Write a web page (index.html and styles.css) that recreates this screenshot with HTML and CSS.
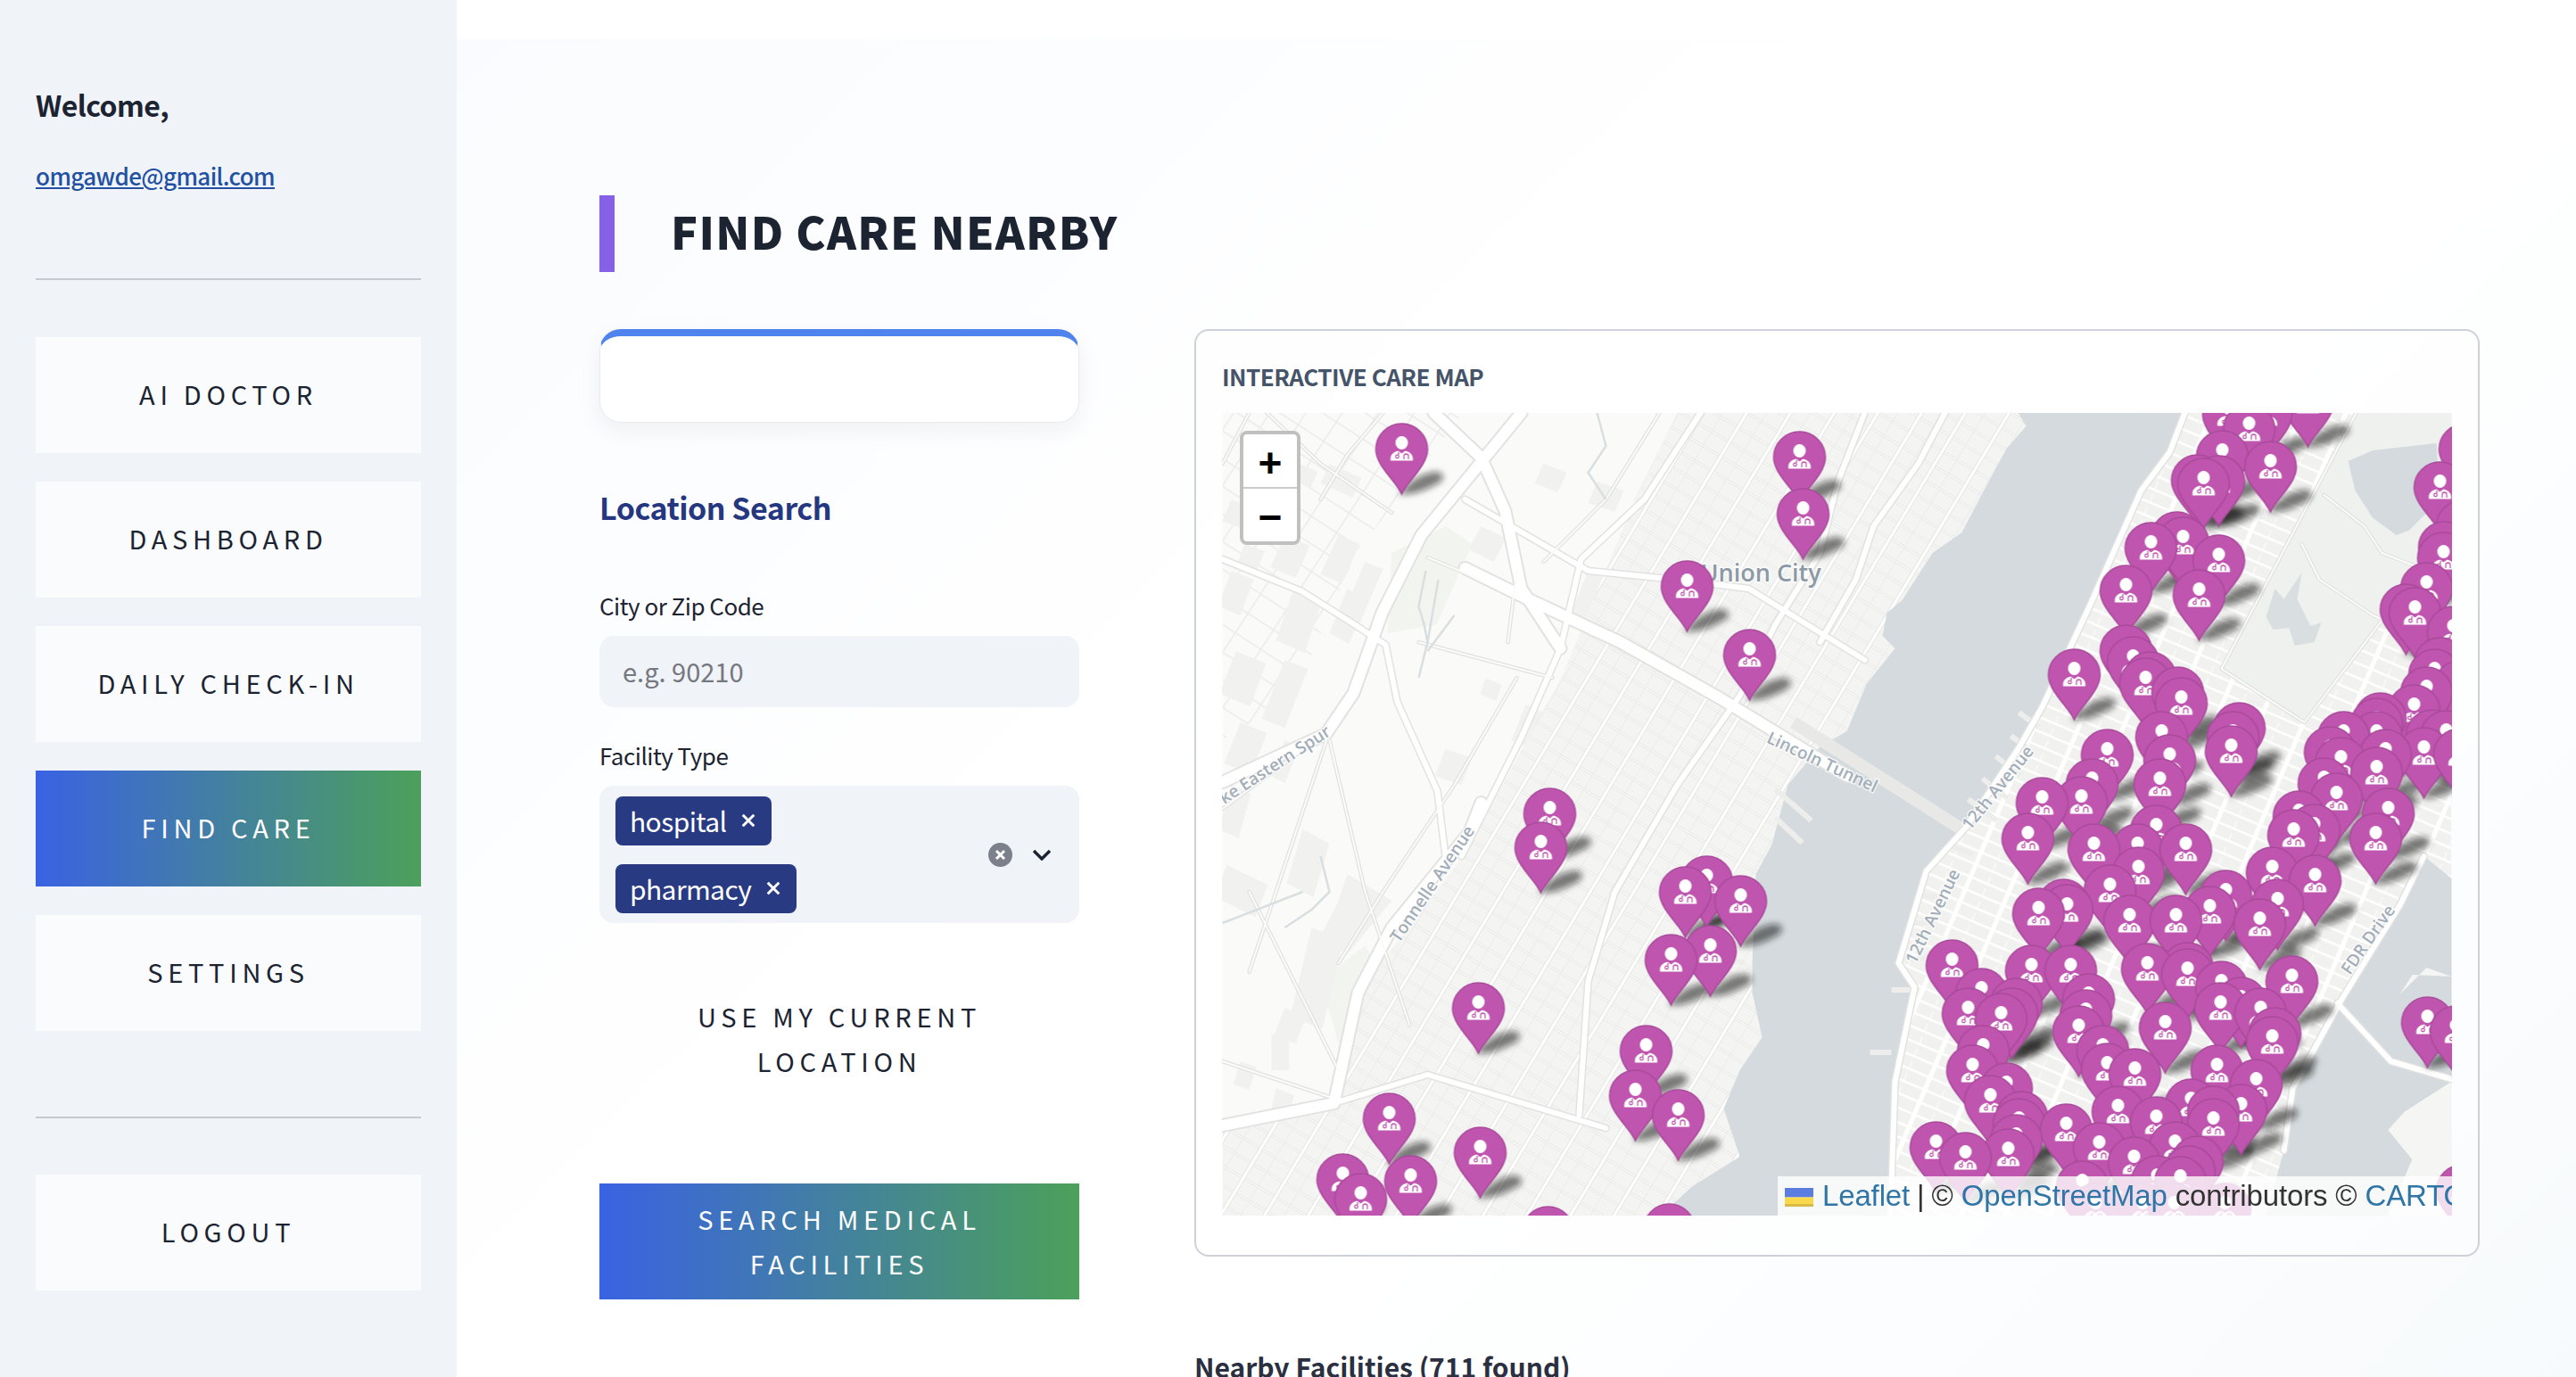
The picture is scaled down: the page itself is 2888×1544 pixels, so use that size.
FILE: index.html
```html
<!DOCTYPE html>
<html lang="en">
<head>
<meta charset="utf-8">
<title>Find Care Nearby</title>
<link rel="stylesheet" href="styles.css">
</head>
<body>
<div class="app">
  <aside class="sidebar">
    <p class="welcome">Welcome,</p>
    <p class="email-row"><a class="email" href="#">omgawde@gmail.com</a></p>
    <hr class="rule rule-top">
    <nav class="nav">
      <button class="btn nav-btn">AI DOCTOR</button>
      <button class="btn nav-btn">DASHBOARD</button>
      <button class="btn nav-btn">DAILY CHECK-IN</button>
      <button class="btn nav-btn btn-primary">FIND CARE</button>
      <button class="btn nav-btn">SETTINGS</button>
    </nav>
    <hr class="rule rule-bottom">
    <button class="btn nav-btn">LOGOUT</button>
  </aside>
  <main class="main">
    <div class="top-strip"></div>
    <div class="content">
      <header class="page-title">
        <span class="title-bar"></span>
        <h1 class="title-text">FIND CARE NEARBY</h1>
      </header>
      <div class="columns">
        <section class="form-col">
          <div class="empty-card"></div>
          <h2 class="section-title">Location Search</h2>
          <label class="field-label field-label-first">City or Zip Code</label>
          <div class="text-input">e.g. 90210</div>
          <label class="field-label field-label-second">Facility Type</label>
          <div class="multi">
            <div class="tags">
              <span class="tag">hospital<svg class="tag-x" viewBox="0 0 14 14"><path d="M1.5 1.5l11 11M12.5 1.5l-11 11"/></svg></span>
              <span class="tag">pharmacy<svg class="tag-x" viewBox="0 0 14 14"><path d="M1.5 1.5l11 11M12.5 1.5l-11 11"/></svg></span>
            </div>
            <svg class="clear-icon" viewBox="0 0 27 27"><circle cx="13.500" cy="13.500" r="13.500"/><path d="M9 9l9 9M18 9l-9 9"/></svg>
            <svg class="chevron-icon" viewBox="0 0 22 14"><path d="M2 3l9 9 9-9"/></svg>
          </div>
          <button class="btn wide-btn locate-btn">USE MY CURRENT LOCATION</button>
          <button class="btn wide-btn btn-primary search-btn">SEARCH MEDICAL FACILITIES</button>
        </section>
        <section class="map-col">
          <div class="map-card">
            <h3 class="map-heading">INTERACTIVE CARE MAP</h3>
            <div class="map">
              <svg class="map-svg" viewBox="1370 463 1378 900" xmlns="http://www.w3.org/2000/svg">
                <defs>
                  <pattern id="gridM" width="46" height="15" patternUnits="userSpaceOnUse" patternTransform="rotate(23 2400 900)">
                    <rect width="46" height="15" fill="#f1f1ef"/>
                    <rect width="46" height="2.500" fill="#fff"/>
                    <rect x="0" width="5" height="15" fill="#fff"/>
                    <rect x="22" y="7" width="2" height="8" fill="#f8f8f7"/>
                  </pattern>
                  <pattern id="gridJ" width="42" height="19" patternUnits="userSpaceOnUse" patternTransform="rotate(31 1900 900)">
                    <rect width="42" height="19" fill="#f4f4f2"/>
                    <rect width="42" height="3" fill="#e8e9e7"/>
                    <rect y="1" width="42" height="1" fill="#fdfdfd"/>
                    <rect width="5" height="19" fill="#e6e7e5"/>
                    <rect x="1" width="3" height="19" fill="#fff"/>
                    <rect x="21" width="1" height="19" fill="#ececea"/>
                  </pattern>
                  <pattern id="gridW" width="34" height="26" patternUnits="userSpaceOnUse" patternTransform="rotate(33 1500 600)">
                    <rect width="34" height="1.500" fill="#ebecea"/>
                    <rect width="1.500" height="26" fill="#ebecea"/>
                  </pattern>
                  <filter id="soft" x="-2%" y="-2%" width="104%" height="104%"><feGaussianBlur stdDeviation="3.800"/></filter>
                  <clipPath id="clipM"><path d="M2449 463H2748V1000L2690 1015 2625 1120 2570 1220 2560 1290 2570 1363H2115L2124 1213 2146 1107 2128 1080 2159 977 2204 927 2262 840 2289 793 2342 680 2400 550 2432 507Z"/></clipPath>
                  <clipPath id="clipJ"><path d="M1880 463H2262L2271 478 2249 503 2222 553 2199 597 2166 620 2132 673 2115 687 2110 713 2124 727 2092 767 2070 820 2040 837 2004 880 1986 947 1968 980 1964 1080 1964 1113 1975 1163 1950 1200 1932 1243 1950 1297 1897 1330 1861 1363H1370V1262L1495 1237 1522 1113 1640 960 1750 760 1820 590Z"/></clipPath>
                  <clipPath id="clipW"><path d="M1370 463H1640L1520 620 1450 780 1370 830Z"/></clipPath>
                  <g id="p">
                    <path class="pin-shadow" d="M-3 0C6 -12 20 -24 40 -25Q50 -22 44 -14C30 -6 14 2 -3 0Z"/>
                    <g class="pin-face">
                      <path class="pin-body" d="M0 0C-6 -14 -29 -32 -29 -50A29 29 0 0 1 29 -50C29 -32 6 -14 0 0Z"/>
                      <ellipse class="pin-white" cx="0" cy="-57.500" rx="7" ry="7.500"/>
                      <path class="pin-white" d="M-12.500 -37.500V-40C-12.500 -45 -8 -47.500 -4 -48.500L0 -45.500 4 -48.500C8 -47.500 12.500 -45 12.500 -40V-37.500Z"/>
                      <circle class="pin-scope" cx="-5" cy="-42" r="1.800"/>
                      <path class="pin-scope" d="M-3.500 -47V-44M2.500 -39V-42.500A2.500 2.500 0 0 1 7.500 -42.500V-39"/>
                    </g>
                  </g>
                  <g id="all-pins">
                    <use href="#p" x="2587" y="501"/><use href="#p" x="2498" y="515"/><use href="#p" x="2540" y="515"/><use href="#p" x="2521" y="532"/><use href="#p" x="1571" y="554"/><use href="#p" x="2763" y="554"/><use href="#p" x="2491" y="562"/><use href="#p" x="2017" y="563"/><use href="#p" x="2545" y="574"/><use href="#p" x="2463" y="589"/><use href="#p" x="2487" y="590"/><use href="#p" x="2470" y="593"/><use href="#p" x="2735" y="597"/><use href="#p" x="2021" y="627"/><use href="#p" x="2760" y="640"/><use href="#p" x="2440" y="653"/><use href="#p" x="2447" y="659"/><use href="#p" x="2740" y="664"/><use href="#p" x="2411" y="665"/><use href="#p" x="2739" y="676"/><use href="#p" x="2487" y="679"/><use href="#p" x="1891" y="708"/><use href="#p" x="2720" y="710"/><use href="#p" x="2383" y="713"/><use href="#p" x="2465" y="718"/><use href="#p" x="2697" y="734"/><use href="#p" x="2707" y="738"/><use href="#p" x="2750" y="759"/><use href="#p" x="2383" y="780"/><use href="#p" x="1961" y="785"/><use href="#p" x="2391" y="793"/><use href="#p" x="2735" y="794"/><use href="#p" x="2325" y="807"/><use href="#p" x="2729" y="807"/><use href="#p" x="2410" y="810"/><use href="#p" x="2405" y="817"/><use href="#p" x="2757" y="820"/><use href="#p" x="2441" y="827"/><use href="#p" x="2720" y="827"/><use href="#p" x="2445" y="839"/><use href="#p" x="2706" y="847"/><use href="#p" x="2668" y="856"/><use href="#p" x="2664" y="862"/><use href="#p" x="2510" y="867"/><use href="#p" x="2726" y="875"/><use href="#p" x="2742" y="876"/><use href="#p" x="2503" y="877"/><use href="#p" x="2423" y="877"/><use href="#p" x="2664" y="877"/><use href="#p" x="2627" y="877"/><use href="#p" x="2501" y="893"/><use href="#p" x="2612" y="894"/><use href="#p" x="2717" y="895"/><use href="#p" x="2757" y="896"/><use href="#p" x="2674" y="897"/><use href="#p" x="2362" y="897"/><use href="#p" x="2432" y="903"/><use href="#p" x="2624" y="906"/><use href="#p" x="2664" y="917"/><use href="#p" x="2605" y="929"/><use href="#p" x="2421" y="930"/><use href="#p" x="2345" y="930"/><use href="#p" x="2619" y="946"/><use href="#p" x="2333" y="950"/><use href="#p" x="2289" y="951"/><use href="#p" x="1737" y="963"/><use href="#p" x="2677" y="963"/><use href="#p" x="2577" y="966"/><use href="#p" x="2594" y="981"/><use href="#p" x="2417" y="982"/><use href="#p" x="2571" y="987"/><use href="#p" x="2273" y="991"/><use href="#p" x="2663" y="991"/><use href="#p" x="1727" y="1001"/><use href="#p" x="2396" y="1003"/><use href="#p" x="2347" y="1003"/><use href="#p" x="2450" y="1003"/><use href="#p" x="2397" y="1029"/><use href="#p" x="2547" y="1029"/><use href="#p" x="2595" y="1038"/><use href="#p" x="1913" y="1039"/><use href="#p" x="2365" y="1049"/><use href="#p" x="1889" y="1051"/><use href="#p" x="2495" y="1055"/><use href="#p" x="1951" y="1061"/><use href="#p" x="2313" y="1065"/><use href="#p" x="2553" y="1065"/><use href="#p" x="2317" y="1071"/><use href="#p" x="2477" y="1073"/><use href="#p" x="2285" y="1075"/><use href="#p" x="2387" y="1083"/><use href="#p" x="2439" y="1083"/><use href="#p" x="2533" y="1087"/><use href="#p" x="1917" y="1117"/><use href="#p" x="1873" y="1127"/><use href="#p" x="2188" y="1133"/><use href="#p" x="2452" y="1136"/><use href="#p" x="2407" y="1137"/><use href="#p" x="2277" y="1139"/><use href="#p" x="2321" y="1139"/><use href="#p" x="2452" y="1143"/><use href="#p" x="2569" y="1151"/><use href="#p" x="2490" y="1157"/><use href="#p" x="2221" y="1165"/><use href="#p" x="2341" y="1171"/><use href="#p" x="2512" y="1175"/><use href="#p" x="2260" y="1176"/><use href="#p" x="1657" y="1181"/><use href="#p" x="2489" y="1181"/><use href="#p" x="2534" y="1187"/><use href="#p" x="2255" y="1187"/><use href="#p" x="2206" y="1187"/><use href="#p" x="2338" y="1189"/><use href="#p" x="2243" y="1193"/><use href="#p" x="2721" y="1197"/><use href="#p" x="2427" y="1203"/><use href="#p" x="2330" y="1207"/><use href="#p" x="2753" y="1207"/><use href="#p" x="2550" y="1209"/><use href="#p" x="2547" y="1219"/><use href="#p" x="1845" y="1229"/><use href="#p" x="2223" y="1229"/><use href="#p" x="2357" y="1229"/><use href="#p" x="2362" y="1249"/><use href="#p" x="2485" y="1251"/><use href="#p" x="2211" y="1251"/><use href="#p" x="2393" y="1255"/><use href="#p" x="2529" y="1267"/><use href="#p" x="2249" y="1271"/><use href="#p" x="1833" y="1279"/><use href="#p" x="2231" y="1285"/><use href="#p" x="2456" y="1289"/><use href="#p" x="2512" y="1295"/><use href="#p" x="2374" y="1297"/><use href="#p" x="2481" y="1297"/><use href="#p" x="1881" y="1301"/><use href="#p" x="2266" y="1303"/><use href="#p" x="1557" y="1305"/><use href="#p" x="2417" y="1309"/><use href="#p" x="2263" y="1311"/><use href="#p" x="2481" y="1311"/><use href="#p" x="2316" y="1317"/><use href="#p" x="2260" y="1329"/><use href="#p" x="2170" y="1337"/><use href="#p" x="2438" y="1337"/><use href="#p" x="2353" y="1338"/><use href="#p" x="1659" y="1343"/><use href="#p" x="2251" y="1345"/><use href="#p" x="2203" y="1349"/><use href="#p" x="2463" y="1353"/><use href="#p" x="2392" y="1354"/><use href="#p" x="2454" y="1364"/><use href="#p" x="1505" y="1373"/><use href="#p" x="1581" y="1375"/><use href="#p" x="2418" y="1375"/><use href="#p" x="2444" y="1376"/><use href="#p" x="2334" y="1381"/><use href="#p" x="2760" y="1385"/><use href="#p" x="1525" y="1395"/><use href="#p" x="2349" y="1406"/><use href="#p" x="2402" y="1406"/><use href="#p" x="2437" y="1406"/><use href="#p" x="2494" y="1406"/><use href="#p" x="1871" y="1429"/><use href="#p" x="1735" y="1432"/>
                  </g>
                  <g id="roads">
                    <path class="road-wide" d="M1607 463L1660 513 1687 573 1705 660 1749 727"/>
                    <path class="road-wide" d="M1705 463L1656 523 1593 600 1549 687 1517 777 1486 823 1370 877"/>
                    <path class="road-wide" d="M1642 637L1709 670 1816 720 1928 783 2070 870"/>
                    <path class="road-wide" d="M1660 900L1647 933 1560 1040 1522 1113 1495 1237 1370 1262"/>
                    <path class="road-mid" d="M1370 627L1459 663 1513 697 1553 723 1566 787 1611 887 1620 960"/>
                    <path class="road-mid" d="M1906 463L1843 560 1772 627 1749 727 1705 827 1638 960"/>
                    <path class="road-mid" d="M1642 560L1780 640 1880 650 1960 660 2090 740"/>
                    <path class="road-mid" d="M1495 1237L1600 1205 1800 1265"/>
                    <path class="road-thin" d="M1370 907L1488 820M1550 463L1510 510 1480 560M1400 463L1370 520M1860 463L1800 560 1730 630M1490 820L1400 1090M1490 830L1530 1000 1580 1150M1400 1000L1500 1200M1590 720L1740 760M1700 640L1690 720M1370 1190L1490 1230M1420 463L1480 520 1560 575M1600 625L1660 650M1700 760L1630 880 1550 1000 1500 1080"/>
                    <path class="road-mid" d="M2449 463L2432 507 2400 550 2342 680 2289 793 2262 840 2204 927 2159 977 2128 1080 2146 1107 2124 1213 2119 1363"/>
                    <path class="road-mid" d="M2717 960L2690 1015 2625 1120 2570 1220 2560 1290"/>
                    <path class="road-mid" d="M2620 1125L2680 1190 2748 1210"/>
                    <path class="road-thin" d="M2490 750L2583 810M2641 463L2490 750M2748 593L2583 810"/>
                    <path class="road-thin" d="M2605 555L2650 590 2670 620 2720 640 2748 670M2580 610L2600 650 2660 690 2695 705"/>
                    <path class="road-mid" d="M2090 463L2060 540 2040 620 1990 700 1950 780 1880 880 1810 1000 1780 1100 1770 1250"/>
                    <path class="road-mid" d="M2180 463L2150 520 2100 590 2080 650 2040 720"/>
                  </g>
                </defs>
                <rect class="land" x="1370" y="463" width="1378" height="900"/>
                <g class="green">
                  <path d="M1560 620l60 -30 30 20 -40 90 -55 10Z"/>
                  <path d="M1880 463l60 0 -70 90 -40 10Z"/>
                  <path d="M1480 1100l50 -40 30 50 -60 60Z"/>
                </g>
                <rect class="grid-w" x="1370" y="463" width="1378" height="900" clip-path="url(#clipW)"/>
                <g class="buildings">
                  <path d="M1445 515l32 14 -8 18 -32 -14ZM1490 520l36 16 -10 22 -36 -16ZM1380 560l30 12 -10 24 -30 -12ZM1425 560l30 14 -8 18 -30 -14ZM1440 600l28 12 -16 36 -28 -12ZM1395 610l22 8 -10 26 -22 -8ZM1500 600l24 10 -20 44 -24 -10ZM1450 660l32 14 -20 58 -32 -14ZM1510 660l22 12 -20 50 -22 -12ZM1530 630l20 8 -30 70 -20 -8ZM1380 640l25 10 -15 40 -25 -10ZM1385 730l34 14 -18 48 -34 -14ZM1440 740l26 10 -26 66 -26 -10ZM1390 810l30 12 -18 46 -30 -12ZM1440 830l16 8 -16 40 -16 -8ZM1380 880l22 10 -14 50 -22 -10ZM1660 590l28 14 -14 26 -28 -14ZM1710 790l22 10 -16 40 -22 -10ZM1620 840l30 10 -12 30 -30 -10ZM1460 930l30 16 -18 60 -30 -16ZM1375 970l46 22 -14 36 -46 -22ZM1470 1040l36 14 -24 100 -36 -14ZM1440 1130l24 10 -12 30 -24 -10ZM1425 1160l20 0 0 40 -20 0ZM1510 980l50 30 -50 60 -30 -20 20 -40ZM1390 1190l18 6 -8 26 -18 -6ZM1430 1220l20 8 -6 28 -20 -8Z"/>
                  <path d="M1790 540l30 10 -10 24 -30 -10ZM1730 520l26 10 -10 22 -26 -10ZM1780 640l20 8 -20 50 -20 -8ZM1830 630l20 8 -24 60 -20 -8ZM1665 760l18 8 -6 18 -18 -8Z"/>
                </g>
                <rect class="grid-j" x="1370" y="463" width="1378" height="900" clip-path="url(#clipJ)"/>
                <rect class="grid-m" x="1370" y="463" width="1378" height="900" clip-path="url(#clipM)"/>
                <path class="park" d="M2641 463H2748V593L2583 810 2490 750Z"/>
                <path class="water" d="M2262 463L2271 478 2249 503 2222 553 2199 597 2166 620 2132 673 2115 687 2110 713 2124 727 2092 767 2070 820 2040 837 2004 880 1986 947 1968 980 1964 1080 1964 1113 1975 1163 1950 1200 1932 1243 1950 1297 1897 1330 1861 1363H2115L2119 1320 2124 1213 2146 1107 2128 1080 2159 977 2204 927 2262 840 2289 793 2342 680 2400 550 2432 507 2449 463Z"/>
                <path class="water" d="M2748 985L2717 960 2690 1015 2625 1120 2570 1220 2560 1290 2540 1363H2677L2704 1300 2677 1267 2695 1247 2748 1213Z"/>
                <path class="water" d="M2632 517L2660 505 2731 497 2735 560 2700 595 2686 600 2659 580 2640 550Z"/>
                <path class="lake" d="M2550 660l10 12 20 -30 -5 30 15 30 12 -4 -8 22 -22 4 -6 -20 -18 2 -8 -14Z"/>
                <path class="land-shape" d="M2748 1095L2704 1093 2690 1115 2720 1085ZM2748 1213L2695 1247 2677 1267 2704 1300 2677 1363H2748Z"/>
                <g class="piers">
                  <path d="M2285 815l-22 -16M2280 845l-26 -20M2265 870l-28 -22M2250 895l-28 -22M2238 920l-32 -24M2212 958l-28 -10M2175 1005h-25M2168 1035h-28M2158 1075h-28M2150 1110h-30M2120 1180h-24M1968 1040l-30 -8M1960 1060l-28 -8M1955 1080l-24 -6M1950 1095l-22 -6M2030 920l-40 -35M2020 945l-30 -28"/>
                </g>
                <path class="tunnel" d="M2010 810L2204 933"/>
                <use class="road-casing" href="#roads"/>
                <use class="road-fill" href="#roads"/>
                <g class="creeks">
                  <path d="M1598 640L1590 680 1596 700 1600 720 1590 760M1612 650L1600 720M1600 730L1630 690M1790 463L1800 500 1780 530 1800 560M1480 960L1490 1000 1470 1020 1440 1040M1370 1035L1460 1000"/>
                </g>
                <text class="map-label label-city" x="1906" y="652">Union City</text>
                <text class="map-label label-road" transform="translate(1372 902) rotate(-33)">ke Eastern Spur</text>
                <text class="map-label label-road" transform="translate(1568 1058) rotate(-56)">Tonnelle Avenue</text>
                <text class="map-label label-road" transform="translate(1979 832) rotate(25)">Lincoln Tunnel</text>
                <text class="map-label label-road" transform="translate(2208 932) rotate(-51)">12th Avenue</text>
                <text class="map-label label-road" transform="translate(2147 1082) rotate(-64)">12th Avenue</text>
                <text class="map-label label-road" transform="translate(2634 1094) rotate(-55)">FDR Drive</text>
                <use class="layer-shadows" href="#all-pins"/>
                <use class="layer-pins" href="#all-pins"/>
              </svg>
              <div class="zoom-ctl">
                <span class="zoom-btn zoom-in">+</span>
                <span class="zoom-btn">&#8722;</span>
              </div>
              <div class="attribution"><svg class="flag" viewBox="0 0 32 21"><rect width="32" height="10.500" fill="#5b7de0"/><rect y="10.500" width="32" height="10.500" fill="#f8d94a"/><rect y="18" width="32" height="3" fill="#d9bb43"/></svg><a class="attr-link" href="#">Leaflet</a><span class="attr-sep">|</span>© <a class="attr-link" href="#">OpenStreetMap</a> contributors © <a class="attr-link" href="#">CARTO</a></div>
            </div>
          </div>
          <h3 class="results-title">Nearby Facilities (711 found)</h3>
        </section>
      </div>
    </div>
  </main>
</div>
</body>
</html>
```

FILE: styles.css
```css
* { box-sizing: border-box; }
html, body { margin: 0; height: 100%; overflow: hidden; }
body { font-family: "Noto Sans CJK SC", "Noto Sans", sans-serif; color: #1c2331; background: #fff; }
.app { display: flex; height: 1544px; overflow: hidden; }

.sidebar { width: 512px; flex: none; background: #f0f4f9; padding: 92px 40px 0; display: flex; flex-direction: column; }
.welcome { margin: 0; font-size: 32px; line-height: 50px; letter-spacing: -0.6px; font-weight: 700; color: #1c2331; }
.email-row { margin: 30px 0 0; font-size: 26px; line-height: 50px; letter-spacing: -0.6px; }
.email { color: #2250a2; text-decoration: underline; font-weight: 500; }
.rule { border: 0; height: 2px; width: 100%; background: #c5c8ce; margin: 0; }
.rule-top { margin-top: 90px; }
.rule-bottom { margin-top: 96px; margin-bottom: 63px; }
.nav { display: flex; flex-direction: column; gap: 32px; margin-top: 64px; }

.btn { border: 0; font-family: inherit; display: block; font-size: 29px; line-height: 50px; letter-spacing: 5.7px; color: #1c2331; font-weight: 400; text-align: center; }
.nav-btn { height: 130px; width: 100%; background: #f9fbfd; padding: 0 0 4px; }
.btn-primary { background: linear-gradient(90deg, #3a62e3, #4ca05a); color: #fff; }
.nav-btn.btn-primary { background: linear-gradient(90deg, #3a62e3, #4ca05a); }

.main { flex: 1; min-width: 0; background: linear-gradient(135deg, #fafbfe 0%, #ffffff 45%, #ffffff 60%, #f7fafc 100%); }
.top-strip { height: 44px; background: #fff; }
.content { padding: 175px 0 0 160px; }
.page-title { display: flex; align-items: center; height: 86px; }
.title-bar { width: 17px; height: 86px; background: #8661e8; flex: none; }
.title-text { margin: 0 0 0 63px; font-size: 50px; line-height: 78px; padding-bottom: 8px; letter-spacing: 1.3px; font-weight: 900; color: #1c2331; }

.columns { display: grid; grid-template-columns: 538px 1441px; column-gap: 129px; margin-top: 64px; }
.form-col { display: flex; flex-direction: column; }
.empty-card { height: 105px; border-radius: 24px; background: #fff; border: 1px solid #e9ebef; border-top: 8px solid #4f84ee; box-shadow: 0 8px 24px rgba(30, 40, 70, 0.06); }
.section-title { margin: 70px 0 0; font-size: 34px; line-height: 50px; letter-spacing: -0.5px; font-weight: 700; color: #25387f; }
.field-label { display: block; font-size: 26px; line-height: 40px; letter-spacing: -0.5px; color: #1c2331; }
.field-label-first { margin-top: 65px; }
.field-label-second { margin-top: 34px; }
.text-input { margin-top: 14px; height: 80px; border-radius: 16px; background: #f0f3f8; color: #75787f; font-size: 29px; line-height: 78px; padding-left: 26px; }
.multi { margin-top: 14px; height: 154px; border-radius: 16px; background: #f0f3f8; display: flex; align-items: center; padding: 0 31px 0 18px; }
.tags { display: flex; flex-direction: column; align-items: flex-start; gap: 21px; flex: 1; }
.tag { height: 55px; border-radius: 8px; background: #283a82; color: #fff; font-size: 30px; line-height: 52px; letter-spacing: -0.6px; display: flex; align-items: center; padding: 0 18px 0 16px; }
.tag-x { width: 16px; height: 16px; margin-left: 17px; fill: none; stroke: #fff; stroke-width: 2.600; }
.clear-icon { width: 27px; height: 27px; flex: none; margin-right: 22px; }
.clear-icon circle { fill: #7c808a; }
.clear-icon path { stroke: #fff; stroke-width: 3; fill: none; }
.chevron-icon { width: 22px; height: 14px; flex: none; fill: none; stroke: #1c2331; stroke-width: 3.400; }

.wide-btn { width: 538px; height: 130px; padding: 14px 70px 16px; }
.locate-btn { background: transparent; margin-top: 65px; }
.search-btn { margin-top: 97px; }

.map-card { height: 1040px; border: 2px solid #cfd1d8; border-radius: 16px; padding: 28px 29px 0 29px; background: rgba(255, 255, 255, 0.4); }
.map-heading { margin: 0; font-size: 26px; line-height: 46px; letter-spacing: -0.5px; font-weight: 700; color: #46546a; }
.map { position: relative; margin-top: 18px; height: 900px; overflow: hidden; }
.map-svg { display: block; width: 100%; height: 100%; }
.results-title { margin: 100px 0 0; font-size: 30px; line-height: 46px; font-weight: 700; color: #2b3040; }

.land { fill: #fafaf8; }
.green path { fill: #f1f4ef; }
.grid-w { fill: url(#gridW); }
.buildings path { fill: #f1f1ef; }
.grid-j { fill: url(#gridJ); }
.grid-m { fill: url(#gridM); }
.park { fill: #eef1ed; }
.water { fill: #d4dadd; }
.lake { fill: #d9dee0; }
.land-shape { fill: #f5f5f3; }
.piers path { fill: none; stroke: #edeeec; stroke-width: 6; }
.tunnel { fill: none; stroke: #e8e9e7; stroke-width: 14; }
.road-casing { --road: #e2e3e1; --thin: #e2e3e1; --w-wide: 16; --w-mid: 9; --w-thin: 4.500; }
.road-fill { --road: #fff; --thin: #fbfbfa; --w-wide: 12; --w-mid: 6; --w-thin: 2; }
.road-wide, .road-mid, .road-thin { fill: none; stroke-linejoin: round; stroke-linecap: round; }
.road-wide { stroke: var(--road); stroke-width: var(--w-wide); }
.road-mid { stroke: var(--road); stroke-width: var(--w-mid); }
.road-thin { stroke: var(--thin); stroke-width: var(--w-thin); }
.creeks path { fill: none; stroke: #d9dfe1; stroke-width: 2.500; }
.map-label { font-family: "Open Sans", sans-serif; fill: #a3aeb8; paint-order: stroke; stroke: #ffffff; stroke-width: 3; stroke-opacity: 0.7; }
.label-city { font-size: 27px; font-weight: 600; fill: #8c99a6; }
.label-road { font-size: 19px; font-weight: 600; }

.layer-shadows { --shadow-show: inline; --face-show: none; filter: url(#soft); }
.layer-pins { --shadow-show: none; --face-show: inline; }
.pin-shadow { display: var(--shadow-show); fill: rgba(20, 20, 20, 0.55); }
.pin-face { display: var(--face-show); }
.pin-body { fill: #bf55ae; stroke: #a94a9b; stroke-width: 1.500; }
.pin-white { fill: #fff; }
.pin-scope { fill: none; stroke: #bf55ae; stroke-width: 1.300; }

.zoom-ctl { position: absolute; left: 20px; top: 20px; width: 68px; height: 128px; border: 4px solid #c0c0c0; border-radius: 8px; background: #fff; display: flex; flex-direction: column; }
.zoom-btn { flex: 1; display: flex; align-items: center; justify-content: center; padding-top: 4px; font-family: "Liberation Sans", sans-serif; font-size: 46px; font-weight: 700; color: #000; }
.zoom-in { border-bottom: 2px solid #ccc; }
.attribution { position: absolute; left: 623px; right: 0; bottom: 0; height: 44px; line-height: 44px; background: rgba(255, 255, 255, 0.8); white-space: nowrap; overflow: hidden; font-family: "Liberation Sans", sans-serif; font-size: 33px; letter-spacing: -0.15px; color: #333; padding-left: 8px; display: block; }
.flag { width: 32px; height: 21px; margin-right: 10px; vertical-align: -1px; }
.attr-link { color: #2f76a6; text-decoration: none; }
.attr-sep { margin: 0 8px; }
```
